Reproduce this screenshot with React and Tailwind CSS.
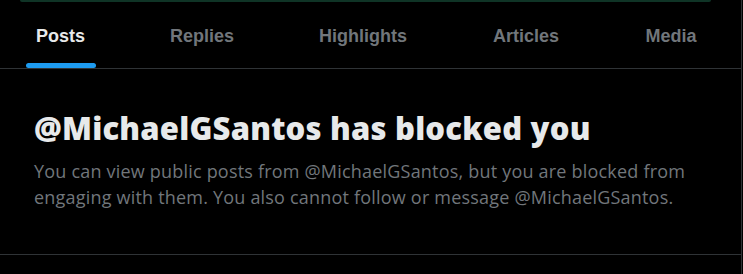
export default function App() {
  const tabs = [
    { label: 'Posts', w: 'w-[121px]', active: true },
    { label: 'Replies', w: 'w-[162px]' },
    { label: 'Highlights', w: 'w-[160px]' },
    { label: 'Articles', w: 'w-[166px]' },
    { label: 'Media', w: 'w-[124px]' },
  ]

  return (
    <div className="h-[274px] w-[743px] overflow-hidden bg-black" style={{ fontFamily: '"Liberation Sans", Arial, sans-serif' }}>
      <div className="w-[742px] h-full border-r border-[#2f3336]">
        {/* tail of the card above */}
        <div className="mx-[20px] mr-[30px] h-[2px] rounded-b-full bg-[#0f3426]" />

        {/* Tabs */}
        <div className="flex h-[67px] border-b border-[#2f3336]">
          {tabs.map((t) => (
            <div key={t.label} className={`${t.w} shrink-0 flex flex-col items-center`}>
              <div className={`mt-[23px] text-[18px] leading-[22px] ${t.active ? 'font-bold text-[#e7e9ea]' : 'font-semibold text-[#71767b]'}`}>
                {t.label}
              </div>
              {t.active && <div className="mt-auto h-[5px] w-[70px] rounded-full bg-[#1d9bf0]" />}
            </div>
          ))}
        </div>

        {/* Blocked notice */}
        <div className="h-[186px] border-b border-[#2f3336] pl-[34px] pr-[30px] pt-[41px]">
          <h1 className="font-['Open_Sans',sans-serif] text-[31px] leading-[36px] font-extrabold text-[#e7e9ea] tracking-[0.2px]">
            @MichaelGSantos has blocked you
          </h1>
          <p className="mt-[12px] font-['Open_Sans',sans-serif] text-[18px] leading-[26px] text-[#71767b] tracking-[0.2px]">
            You can view public posts from @MichaelGSantos, but you are blocked from engaging with them. You also cannot follow or message @MichaelGSantos.
          </p>
        </div>
      </div>
    </div>
  )
}
